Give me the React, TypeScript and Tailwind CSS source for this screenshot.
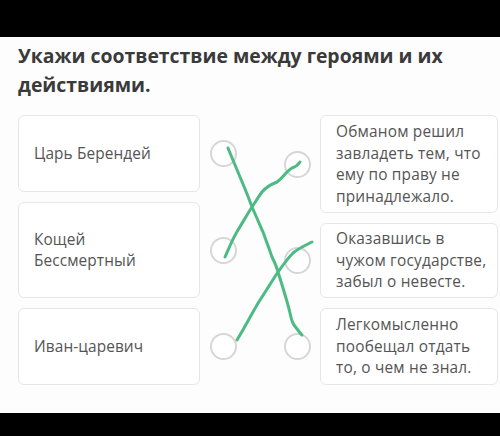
import React from "react";

const leftItems = [
  { text: "Царь Берендей", h: "h-[77px]" },
  { text: "Кощей\nБессмертный", h: "h-[96px]" },
  { text: "Иван-царевич", h: "h-[77px]" },
];

const rightItems = [
  { text: "Обманом решил\nзавладеть тем, что\nему по праву не\nпринадлежало.", h: "h-[98px]" },
  { text: "Оказавшись в\nчужом государстве,\nзабыл о невесте.", h: "h-[75px]" },
  { text: "Легкомысленно\nпообещал отдать\nто, о чем не знал.", h: "h-[77px]" },
];

function Circle() {
  return <div className="w-[27px] h-[27px] shrink-0 rounded-full border-2 border-[#d6d6d6] bg-white" />;
}

export default function App() {
  return (
    <div
      className="relative w-[500px] h-[436px] bg-black overflow-hidden"
      style={{ fontFamily: '"Open Sans", "Noto Sans", sans-serif' }}
    >
      <div className="h-[37px] bg-black" />
      <div className="h-[376px] bg-[#fdfdfd] pt-[4px]">
        <h1 className="px-[18px] text-[19.4px] leading-[29px] font-bold text-[#3a3a3a]">
          Укажи соответствие между героями и их действиями.
        </h1>
        <div className="flex px-[18px] mt-[16px] gap-[47px]">
          <div className="flex flex-col gap-[10px]">
            {leftItems.map((it, i) => (
              <div key={i} className="flex items-center gap-[10px]">
                <div
                  className={`w-[182px] ${it.h} flex items-center px-[15px] bg-white border border-[#e6e6e6] rounded-[6px] text-[15.4px] leading-[21px] tracking-[0.1px] text-[#555555] whitespace-pre`}
                >
                  {it.text}
                </div>
                <Circle />
              </div>
            ))}
          </div>
          <div className="flex flex-col gap-[10px]">
            {rightItems.map((it, i) => (
              <div key={i} className="flex items-center gap-[9px]">
                <Circle />
                <div
                  className={`w-[178px] ${it.h} flex items-center pl-[15px] pr-[6px] bg-white border border-[#e6e6e6] rounded-[6px] text-[15.4px] leading-[21.5px] tracking-[0.2px] text-[#555555] whitespace-pre`}
                >
                  {it.text}
                </div>
              </div>
            ))}
          </div>
        </div>
      </div>
      <svg
        className="absolute left-0 top-0 pointer-events-none"
        width="500"
        height="436"
        viewBox="0 0 500 436"
        fill="none"
      >
        <g stroke="#4cbb83" strokeWidth="3" strokeLinecap="round" strokeLinejoin="round">
          <path d="M228 148 C236 168 246 190 252 207 C257 218 261 228 263 232 C267 243 270 251 272 257 C275 263 277 268 278 272 C282 285 287 300 290 313 C291 318 292 322 294 325 C297 329 300 333 302 335" />
          <path d="M225 257 C229 248 233 238 238 230 C243 222 248 213 252 207 C256 201 259 196 262 192 C266 187 272 184 277 182 C281 179 284 175 287 172 C289 170 290 169 292 168 C295 167 298 165 300 162" />
          <path d="M237 340 C245 327 252 313 260 300 C266 291 272 281 278 272 C283 265 288 258 293 253 C299 248 306 245 312 242" />
        </g>
      </svg>
    </div>
  );
}
